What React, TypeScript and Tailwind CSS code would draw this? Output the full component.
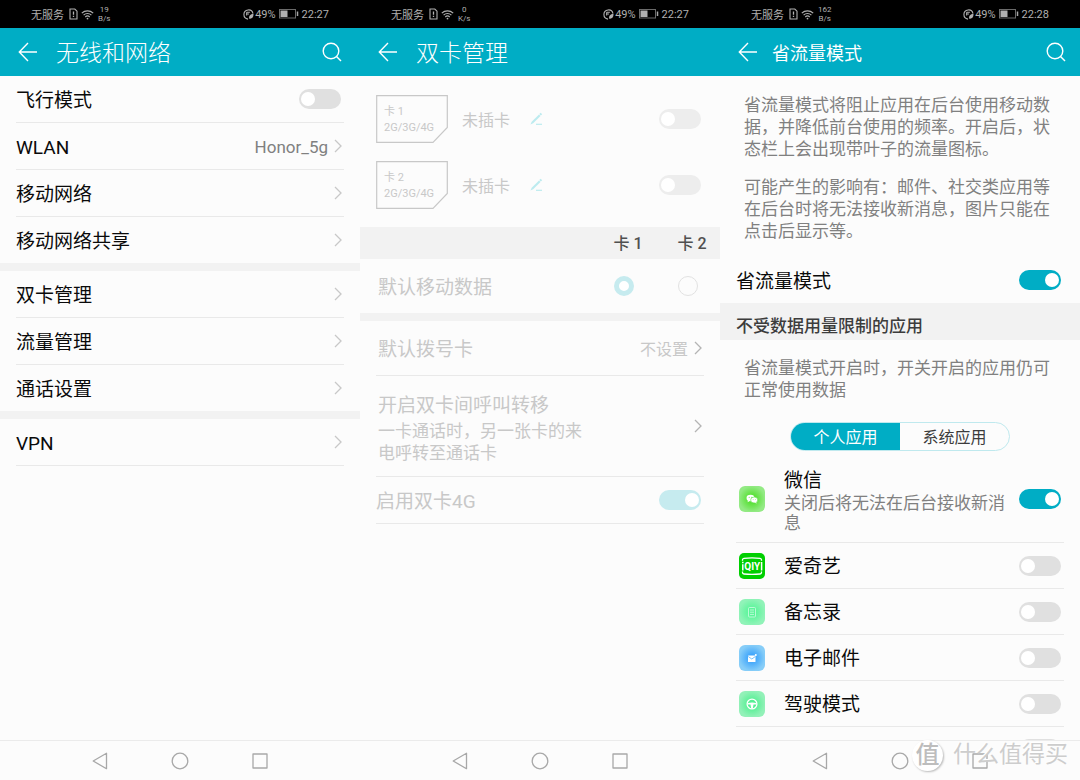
import { useId, useState, type ReactNode } from "react";

const FONT = "font-[Roboto,'Noto_Sans_CJK_SC',sans-serif]";

function Chevron({ dark = false }: { dark?: boolean }) {
  return (
    <svg viewBox="0 0 8 14" className={`h-[14px] w-2 shrink-0 ${dark ? "text-[#b4b4b4]" : "text-[#c8c8c8]"}`} fill="none" stroke="currentColor" strokeWidth="1.3">
      <path d="M1 1l6 6-6 6" />
    </svg>
  );
}

function Switch({ id, label, on = false, disabled = false }: { id?: string; label?: string; on?: boolean; disabled?: boolean }) {
  const tone = disabled ? "bg-[#ededed] checked:bg-[#c6ebef]" : "bg-[#e0e0e0] checked:bg-[#00adc5]";
  return (
    <input
      id={id}
      aria-label={label}
      type="checkbox"
      role="switch"
      defaultChecked={on}
      disabled={disabled}
      className={`flex h-5 w-[42px] shrink-0 appearance-none items-center rounded-full px-[2px] before:block before:size-[14px] before:rounded-full before:bg-white before:content-[''] checked:before:translate-x-6 ${tone}`}
    />
  );
}

function StatusBar({ rate, unit, time }: { rate: string; unit: string; time: string }) {
  return (
    <div className="flex h-7 shrink-0 items-center justify-between bg-black pr-[31px] pl-[31px] text-[11px] leading-4 text-[#b0b0b0]">
      <div className="flex items-center">
        <span className="pt-[3px]">无服务</span>
        <svg viewBox="0 0 9 12" className="ml-[5px] h-3 w-[9px]" fill="none" stroke="currentColor" strokeWidth="1.1">
          <path d="M1 1h4.8L8 3.2V11H1z" />
          <path d="M4.5 3.4v3.4M4.5 7.8v1.3" strokeWidth="1.3" />
        </svg>
        <svg viewBox="0 0 13 11" className="ml-[3px] h-[11px] w-[13px]" fill="none" stroke="currentColor" strokeWidth="1.2">
          <path d="M.8 4.1a8.2 8.2 0 0 1 11.4 0M2.6 6.1a5.6 5.6 0 0 1 7.8 0M4.3 8a3.2 3.2 0 0 1 4.4 0" />
          <circle cx="6.5" cy="9.6" r=".9" fill="currentColor" stroke="none" />
        </svg>
        <span className="ml-1 flex flex-col items-center text-[8px] leading-[9px]">
          <span>{rate}</span>
          <span>{unit}</span>
        </span>
      </div>
      <div className="flex items-center">
        <svg viewBox="0 0 12 12" className="mr-[1px] size-[11px]" fill="none" stroke="currentColor" strokeWidth="1.2">
          <path d="M5.500 11A5 5 0 1 1 10.900 5" />
          <path d="M4 3.500h3.500M4 5.500h2.500M4 3.500v3.500" />
          <path d="M11.500 5.500C8 5.500 6 7.500 6.800 10.500c3 .5 4.700-1.500 4.700-5z" fill="currentColor" stroke="none" />
        </svg>
        <span className="pt-[1px]">49%</span>
        <svg viewBox="0 0 20 10" className="mx-[3px] h-[10px] w-5" fill="none">
          <rect x=".5" y=".5" width="16" height="8.500" stroke="#6a6a6a" />
          <rect x="1.500" y="1.500" width="7" height="6.500" fill="#b0b0b0" />
          <path d="M18.500 2.500v4.500" stroke="#a6a6a6" strokeWidth="1.500" />
        </svg>
        <span className="pt-[1px]">{time}</span>
      </div>
    </div>
  );
}

function AppBar({ title, compact = false, search = true }: { title: string; compact?: boolean; search?: boolean }) {
  return (
    <header className={`flex h-12 shrink-0 items-center bg-[#00adc5] pl-[18px] text-white ${compact ? "pr-[14px]" : "pr-[18px]"}`}>
      <button type="button" aria-label="返回">
        <svg viewBox="0 0 20 20" className="size-5" fill="none" stroke="currentColor" strokeWidth="1.400">
          <path d="M19 10H1.500M10 1L1.300 10l8.700 9" />
        </svg>
      </button>
      <h1 className={`flex-1 pt-1 ${compact ? "ml-[14px] text-lg" : "ml-[18px] text-[23px] font-light"} leading-8`}>{title}</h1>
      {search && (
        <button type="button" aria-label="搜索">
          <svg viewBox="0 0 20 20" className="size-5" fill="none" stroke="currentColor" strokeWidth="1.400">
            <circle cx="9" cy="9" r="7.800" />
            <path d="M14.500 14.500l4.500 4.500" />
          </svg>
        </button>
      )}
    </header>
  );
}

function NavBar() {
  return (
    <nav className="flex h-10 shrink-0 items-center justify-center gap-[60px] border-t border-[#ebebeb] bg-[#fcfcfc] text-[#a8a8a8]">
      <button type="button" aria-label="后退">
        <svg viewBox="0 0 20 20" className="size-5" fill="none" stroke="currentColor" strokeWidth="1.300" strokeLinejoin="round">
          <path d="M16.500 2.300v15.400L3.200 10z" />
        </svg>
      </button>
      <button type="button" aria-label="主屏幕">
        <svg viewBox="0 0 20 20" className="size-5" fill="none" stroke="currentColor" strokeWidth="1.300">
          <circle cx="10" cy="10" r="7.800" />
        </svg>
      </button>
      <button type="button" aria-label="最近任务">
        <svg viewBox="0 0 20 20" className="size-5" fill="none" stroke="currentColor" strokeWidth="1.300" strokeLinejoin="round">
          <rect x="3" y="3" width="14" height="14" />
        </svg>
      </button>
    </nav>
  );
}

function Phone({ status, bar, children }: { status: ReactNode; bar: ReactNode; children: ReactNode }) {
  return (
    <section className="flex h-full min-w-0 flex-col overflow-hidden bg-[#fcfcfc]">
      {status}
      {bar}
      <div className="min-h-0 flex-1 overflow-hidden">{children}</div>
      <NavBar />
    </section>
  );
}

function LinkRow({ label, value }: { label: string; value?: string }) {
  return (
    <a href="#" className="flex h-[47px] items-center pr-[2px] text-[19px] leading-6 text-[#0a0a0a] last:h-[46px]">
      <span className="flex-1 pt-[3px]">{label}</span>
      {value && <span className="mr-[6px] pt-[2px] text-[17px] text-[#808080]">{value}</span>}
      <Chevron />
    </a>
  );
}

function Group({ children }: { children: ReactNode }) {
  return <div className="divide-y divide-[#e9e9e9] px-4">{children}</div>;
}

function NetworkScreen() {
  return (
    <Phone status={<StatusBar rate="19" unit="B/s" time="22:27" />} bar={<AppBar title="无线和网络" />}>
      <Group>
        <div className="flex h-[47px] items-center justify-between pr-[3px] text-[19px] leading-6 text-[#0a0a0a]">
          <label htmlFor="airplane" className="pt-[3px]">飞行模式</label>
          <Switch id="airplane" />
        </div>
        <LinkRow label="WLAN" value="Honor_5g" />
        <LinkRow label="移动网络" />
        <LinkRow label="移动网络共享" />
      </Group>
      <div className="h-2 bg-[#f2f2f2]" />
      <Group>
        <LinkRow label="双卡管理" />
        <LinkRow label="流量管理" />
        <LinkRow label="通话设置" />
      </Group>
      <div className="h-2 bg-[#f2f2f2]" />
      <Group>
        <LinkRow label="VPN" />
        <div />
      </Group>
    </Phone>
  );
}

function SimRow({ slot }: { slot: string }) {
  return (
    <div className="flex h-[66px] items-center pr-[19px] pl-4 text-[#c8c8c8]">
      <div className="relative h-12 w-[72px] shrink-0 pt-[9px] pl-2 text-[11px] leading-4">
        <svg viewBox="0 0 72 48" className="absolute inset-0 size-full" fill="none" stroke="currentColor" strokeWidth="1.200">
          <path d="M.7.7h70.600v31.800L57 47.300H.7z" />
        </svg>
        <p>{slot}</p>
        <p>2G/3G/4G</p>
      </div>
      <span className="ml-[14px] pt-[3px] text-base leading-6">未插卡</span>
      <button type="button" aria-label={`编辑${slot}`} disabled className="ml-[19px]">
        <svg viewBox="0 0 14 14" className="size-[14px] text-[#bcebef]" fill="none" stroke="currentColor">
          <path d="M1.500 12.500l1.200-2.800L10 2.400l1.500 1.500-7.300 7.300z" fill="currentColor" stroke="none" />
          <path d="M11 1.400l1.500 1.500" strokeWidth="2" />
          <path d="M7 12.300h6" strokeWidth="1.200" />
        </svg>
      </button>
      <span className="flex-1" />
      <Switch label={slot} disabled />
    </div>
  );
}

function DualSimScreen() {
  const radio =
    "size-5 appearance-none rounded-full border border-[#e2e2e2] checked:border-[5px] checked:border-[#c6ebef] checked:bg-white";
  return (
    <Phone status={<StatusBar rate="0" unit="K/s" time="22:27" />} bar={<AppBar title="双卡管理" search={false} />}>
      <div className="pt-[10px] pb-[9px]">
        <SimRow slot="卡 1" />
        <SimRow slot="卡 2" />
      </div>
      <div className="flex h-8 items-center justify-end bg-[#f2f2f2] pt-[2px] text-base leading-6 font-medium text-[#505050]">
        <span className="w-16 pl-2 text-center">卡 1</span>
        <span className="w-16 pl-2 text-center">卡 2</span>
      </div>
      <div className="flex h-[54px] items-center pl-[18px] text-[19px] leading-6 text-[#c8c8c8]">
        <span className="flex-1 pt-[3px]">默认移动数据</span>
        <span className="flex w-16 justify-center">
          <input type="radio" name="data" aria-label="卡 1" defaultChecked disabled className={radio} />
        </span>
        <span className="flex w-16 justify-center">
          <input type="radio" name="data" aria-label="卡 2" disabled className={radio} />
        </span>
      </div>
      <div className="h-2 bg-[#f2f2f2]" />
      <Group>
        <a href="#" className="flex h-[55px] items-center pr-[2px] pl-[2px] text-[19px] leading-6 text-[#c8c8c8]">
          <span className="flex-1 pt-[3px]">默认拨号卡</span>
          <span className="mr-[6px] pt-[3px] text-base">不设置</span>
          <Chevron dark />
        </a>
        <a href="#" className="flex h-[101px] items-center pr-[2px] pl-[2px] text-[#c8c8c8]">
          <span className="flex-1 pt-[3px]">
            <span className="block text-[19px] leading-7">开启双卡间呼叫转移</span>
            <span className="block max-w-[210px] text-[17px] leading-[22px]">一卡通话时，另一张卡的来电呼转至通话卡</span>
          </span>
          <Chevron dark />
        </a>
        <div className="flex h-[47px] items-center justify-between pr-[3px] text-[19px] leading-6 text-[#c8c8c8]">
          <label htmlFor="dual4g" className="pt-[3px]">启用双卡4G</label>
          <Switch id="dual4g" on disabled />
        </div>
        <div />
      </Group>
    </Phone>
  );
}

function WeChatIcon() {
  return (
    <svg viewBox="0 0 26 26" className="size-[26px]">
      <defs>
        <radialGradient id="wx">
          <stop offset=".25" stopColor="#55e032" />
          <stop offset="1" stopColor="#93ea84" />
        </radialGradient>
      </defs>
      <rect width="26" height="26" rx="6" fill="url(#wx)" />
      <ellipse cx="11.500" cy="12" rx="4" ry="3.300" fill="#fff" />
      <path d="M9 14.500l-.5 1.800 2-1z" fill="#fff" />
      <ellipse cx="15.200" cy="14" rx="3.600" ry="3" fill="#fff" stroke="#58dc40" strokeWidth=".6" />
      <path d="M17 16l.8 1.500-2-.7z" fill="#fff" />
      <g fill="#58dc40">
        <circle cx="10.200" cy="11.200" r=".5" />
        <circle cx="12.800" cy="11.200" r=".5" />
        <circle cx="14.100" cy="13.300" r=".4" />
        <circle cx="16.400" cy="13.300" r=".4" />
      </g>
    </svg>
  );
}

function IqiyiIcon() {
  return (
    <svg viewBox="0 0 26 26" className="size-[26px]">
      <rect width="26" height="26" rx="5" fill="#00cf00" />
      <path d="M3.500 7.800v-1c0-1 .5-1.400 1.500-1.500a70 70 0 0 1 16 0c1 .1 1.500.5 1.500 1.500v1M3.500 18.500v1c0 1 .5 1.400 1.500 1.500a70 70 0 0 0 16 0c1-.1 1.500-.5 1.500-1.500v-1" fill="none" stroke="#fff" strokeWidth="1.300" />
      <path d="M3.800 8.800v1.400M3.800 11.200v6.300M22.600 9v8.500" stroke="#fff" strokeWidth="1.500" />
      <text x="13.200" y="16.900" textAnchor="middle" fontSize="10" fontWeight="700" fill="#fff">QIY</text>
    </svg>
  );
}

function NotesIcon() {
  return (
    <svg viewBox="0 0 26 26" className="size-[26px]">
      <defs>
        <radialGradient id="note">
          <stop offset=".25" stopColor="#5bf59a" />
          <stop offset="1" stopColor="#90f3b8" />
        </radialGradient>
      </defs>
      <rect width="26" height="26" rx="6" fill="url(#note)" />
      <g fill="none" stroke="#c4fbdc" strokeWidth=".9">
        <rect x="9.500" y="8.500" width="7" height="9.500" rx="1" />
        <path d="M11 11h4M11 13.200h4M11 15.400h4" />
      </g>
    </svg>
  );
}

function MailIcon() {
  return (
    <svg viewBox="0 0 26 26" className="size-[26px]">
      <defs>
        <radialGradient id="mail">
          <stop offset=".25" stopColor="#3fa5fb" />
          <stop offset="1" stopColor="#86cdf8" />
        </radialGradient>
      </defs>
      <rect width="26" height="26" rx="6" fill="url(#mail)" />
      <rect x="9" y="10.500" width="7.500" height="6.500" rx=".5" fill="#fff" />
      <path d="M9.200 11.500l3.600 2.500 3.600-2.500" fill="none" stroke="#5ab2f6" strokeWidth=".8" />
      <circle cx="16.800" cy="10" r="1" fill="#fff" />
    </svg>
  );
}

function DriveIcon() {
  return (
    <svg viewBox="0 0 26 26" className="size-[26px]">
      <defs>
        <radialGradient id="drive">
          <stop offset=".25" stopColor="#54f093" />
          <stop offset="1" stopColor="#92f1b8" />
        </radialGradient>
      </defs>
      <rect width="26" height="26" rx="6" fill="url(#drive)" />
      <circle cx="13" cy="13" r="4.900" fill="none" stroke="#fff" strokeWidth="1.300" />
      <path d="M8.500 12.300c2.500-1 6.500-1 9 0l-.3 1.300h-2.700l-.7 3.800h-1.600l-.7-3.800H8.800z" fill="#fff" />
    </svg>
  );
}

function AppRow({ icon, name, note, on }: { icon: ReactNode; name: string; note?: string; on?: boolean }) {
  const id = useId();
  return (
    <div className={`flex items-center pr-[3px] pl-[3px] ${note ? "h-[87px]" : "h-[46px]"}`}>
      {icon}
      <label htmlFor={id} className="mr-[14px] ml-[19px] flex-1 pt-[3px] text-[19px] leading-6 text-[#0a0a0a]">
        {name}
        {note && <span className="block text-[17px] leading-5 text-[#808080]">{note}</span>}
      </label>
      <Switch id={id} on={on} />
    </div>
  );
}

function DataSaverScreen() {
  const [tab, setTab] = useState(0);
  return (
    <Phone status={<StatusBar rate="162" unit="B/s" time="22:28" />} bar={<AppBar title="省流量模式" compact />}>
      <div className="space-y-4 px-6 pt-[18px] text-[17px] leading-[22px] text-[#808080]">
        <p>省流量模式将阻止应用在后台使用移动数据，并降低前台使用的频率。开启后，状态栏上会出现带叶子的流量图标。</p>
        <p>可能产生的影响有：邮件、社交类应用等在后台时将无法接收新消息，图片只能在点击后显示等。</p>
      </div>
      <div className="mt-[15px] flex h-[46px] items-center justify-between pr-[19px] pl-4 text-[19px] leading-6 text-[#0a0a0a]">
        <label htmlFor="saver" className="pt-[3px]">省流量模式</label>
        <Switch id="saver" on />
      </div>
      <h2 className="h-[37px] bg-[#f2f2f2] px-4 pt-[11px] text-[17px] leading-6 font-medium text-[#3c3c3c]">不受数据用量限制的应用</h2>
      <p className="px-6 pt-[17px] text-[17px] leading-[22px] text-[#808080]">省流量模式开启时，开关开启的应用仍可正常使用数据</p>
      <div className="mx-auto mt-[21px] flex h-[29px] w-[220px] overflow-hidden rounded-full border border-[#bfe9ee] text-base leading-6">
        {["个人应用", "系统应用"].map((name, i) => (
          <button key={name} type="button" onClick={() => setTab(i)} aria-pressed={tab === i} className={`flex-1 pt-[2px] ${tab === i ? "bg-[#00adc5] text-white" : "text-[#3c3c3c]"}`}>
            {name}
          </button>
        ))}
      </div>
      <div className="mt-[5px]">
        <Group>
          <AppRow icon={<WeChatIcon />} name="微信" note="关闭后将无法在后台接收新消息" on />
          <AppRow icon={<IqiyiIcon />} name="爱奇艺" />
          <AppRow icon={<NotesIcon />} name="备忘录" />
          <AppRow icon={<MailIcon />} name="电子邮件" />
          <AppRow icon={<DriveIcon />} name="驾驶模式" />
          <div className="flex h-11 items-center justify-end pr-[3px]">
            <Switch label="应用" />
          </div>
        </Group>
      </div>
    </Phone>
  );
}

export default function App() {
  return (
    <main className={`relative grid h-screen grid-cols-3 overflow-hidden bg-[#fcfcfc] ${FONT}`}>
      <NetworkScreen />
      <DualSimScreen />
      <DataSaverScreen />
      <div className="pointer-events-none absolute right-3 bottom-[9px] flex items-center gap-[10px]">
        <span className="flex size-[31px] items-center justify-center rounded-full bg-white text-[24px] leading-8 font-medium text-[#bdbdbd] shadow-[1px_1px_2px_#bbbbbb]">值</span>
        <span className="text-[23px] leading-8 text-[#cdcdcd] [text-shadow:-1px_-1px_0_#ffffff]">什么值得买</span>
      </div>
    </main>
  );
}
